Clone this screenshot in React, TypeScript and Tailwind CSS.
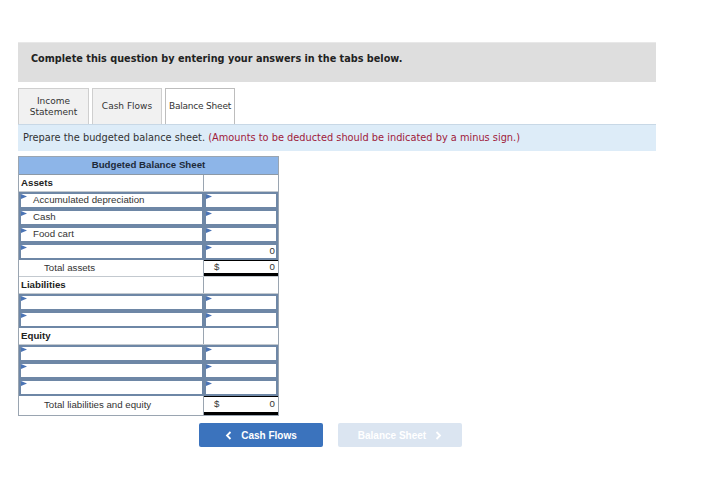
import React from "react";

const Tri = () => (
  <svg className="absolute left-0 top-0" width="6" height="6" viewBox="0 0 6 6">
    <polygon points="0,0 6,2.5 0,5" fill="#4b74b5" />
  </svg>
);

type Row =
  | { kind: "head"; label: string }
  | { kind: "input"; label?: string; value?: string }
  | { kind: "total"; label: string };

const rows: Row[] = [
  { kind: "head", label: "Assets" },
  { kind: "input", label: "Accumulated depreciation" },
  { kind: "input", label: "Cash" },
  { kind: "input", label: "Food cart" },
  { kind: "input", value: "0" },
  { kind: "total", label: "Total assets" },
  { kind: "head", label: "Liabilities" },
  { kind: "input" },
  { kind: "input" },
  { kind: "head", label: "Equity" },
  { kind: "input" },
  { kind: "input" },
  { kind: "input" },
  { kind: "total", label: "Total liabilities and equity" },
];

export default function App() {
  return (
    <div className="w-[722px] h-[487px] bg-white relative" style={{ fontFamily: "'DejaVu Sans', Verdana, sans-serif" }}>
      <div className="absolute left-[18px] top-[42px] w-[638px]">
        <div className="h-[40px] bg-[#dedede] border-t border-[#e8e8e8] pt-[9px] pl-[13px] text-[9.7px] font-bold text-[#222]">
          Complete this question by entering your answers in the tabs below.
        </div>

        <div className="flex gap-[3px] mt-[6px] text-[9px] text-[#333] leading-[11px]">
          <div className="w-[71px] h-[36px] bg-[#f1f1f1] border border-[#cfcfcf] border-b-0 flex items-center justify-center text-center">
            Income<br />Statement
          </div>
          <div className="w-[70px] h-[36px] bg-[#f1f1f1] border border-[#cfcfcf] border-b-0 flex items-center justify-center">
            Cash Flows
          </div>
          <div className="w-[70px] h-[36px] bg-white border border-[#bdbdbd] border-b-0 flex items-center justify-center tracking-[-0.2px]">
            Balance Sheet
          </div>
        </div>

        <div className="h-[27px] bg-[#ddecf8] border-t border-[#c8d8e6] flex items-center pl-[5px] text-[9.8px] text-[#333]">
          Prepare the budgeted balance sheet.&nbsp;
          <span className="text-[#a0203a]">(Amounts to be deducted should be indicated by a minus sign.)</span>
        </div>

        <div className="mt-[5px] w-[261px] border border-[#9aa5b1]" style={{ fontFamily: "'Liberation Sans', Arial, sans-serif" }}>
          <div className="h-[18px] bg-[#8db5e8] border-b border-[#8c99a6] flex items-center justify-center text-[9.7px] font-bold text-[#1d2a3a]">
            Budgeted Balance Sheet
          </div>
          {rows.map((r, i) => {
            const last = i === rows.length - 1;
            if (r.kind === "head")
              return (
                <div key={i} className="flex h-[17px] border-b border-[#c3c9cf]">
                  <div className="w-[185px] border-r border-[#9aa5b1] pl-[2px] text-[9.7px] font-bold text-[#222] flex items-center">
                    {r.label}
                  </div>
                  <div className="flex-1" />
                </div>
              );
            if (r.kind === "total")
              return (
                <div key={i} className={`flex ${last ? "h-[19px]" : "h-[17px] border-b border-[#c3c9cf]"}`}>
                  <div className="w-[185px] border-r border-[#9aa5b1] pl-[25px] text-[9.7px] text-[#333] flex items-center">
                    {r.label}
                  </div>
                  <div className="flex-1 border-t border-black border-b-[3px] border-b-black flex items-center justify-between pl-[10px] pr-[3px] text-[9.7px] text-[#333]">
                    <span>$</span>
                    <span>0</span>
                  </div>
                </div>
              );
            return (
              <div key={i} className="flex h-[17px]">
                <div className="relative w-[185px] border-2 border-[#6e87a6] bg-white pl-[12px] text-[9.7px] text-[#333] flex items-center">
                  <Tri />
                  {r.label}
                </div>
                <div className="relative flex-1 border-2 border-[#6e87a6] bg-white flex items-center justify-end pr-[1px] text-[9.7px] text-[#333]">
                  <Tri />
                  {r.value}
                </div>
              </div>
            );
          })}
        </div>
      </div>

      <div className="absolute left-[199px] top-[423px] flex gap-[15px] text-[10px] font-bold" style={{ fontFamily: "'Liberation Sans', Arial, sans-serif" }}>
        <div className="w-[124px] h-[24px] bg-[#3b73bd] rounded-[2px] text-white flex items-center justify-center gap-[9px]">
          <svg width="7" height="9" viewBox="0 0 7 9"><polyline points="5.5,1 2,4.5 5.5,8" fill="none" stroke="white" strokeWidth="1.8" /></svg>
          Cash Flows
        </div>
        <div className="w-[124px] h-[24px] bg-[#dbe5f1] rounded-[2px] text-white flex items-center justify-center gap-[9px]">
          Balance Sheet
          <svg width="7" height="9" viewBox="0 0 7 9"><polyline points="1.5,1 5,4.5 1.5,8" fill="none" stroke="white" strokeWidth="1.8" /></svg>
        </div>
      </div>
    </div>
  );
}
